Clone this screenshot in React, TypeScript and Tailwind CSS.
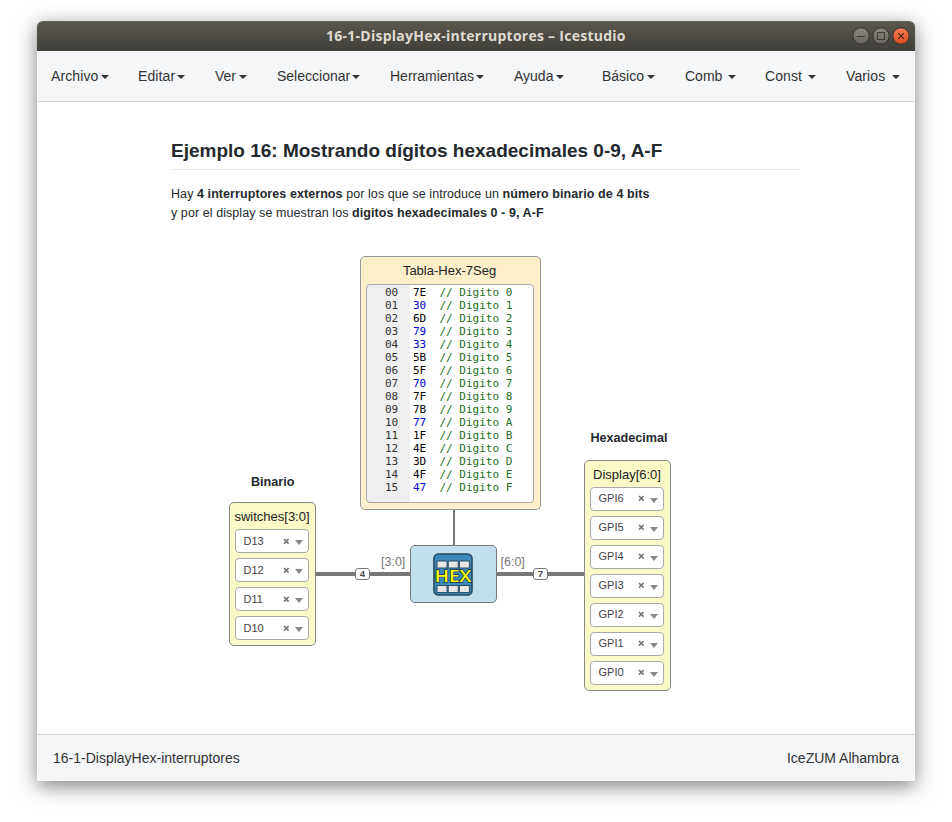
import React from "react";

const MENU_LEFT = [
  { label: "Archivo", box: "w-[87px]", text: "w-[50px] tracking-[0.1px]" },
  { label: "Editar", box: "w-[77px]", text: "w-[39px] tracking-[0.1px]" },
  { label: "Ver", box: "w-[62px]", text: "w-[24px]" },
  { label: "Seleccionar", box: "w-[113px]", text: "w-[75px]" },
  { label: "Herramientas", box: "w-[124px]", text: "w-[86px]" },
  { label: "Ayuda", box: "w-[88px]", text: "w-[42px]" },
  { label: "Básico", box: "w-[83px]", text: "w-[45px]" },
  { label: "Comb", box: "w-[80px]", text: "w-[43px]" },
  { label: "Const", box: "w-[81px]", text: "w-[43px] tracking-[0.1px]" },
  { label: "Varios", box: "w-[56px]", text: "w-[46px] tracking-[0.1px]" },
];

const CODE = ["7E", "30", "6D", "79", "33", "5B", "5F", "70", "7F", "7B", "77", "1F", "4E", "3D", "4F", "47"];

function Caret() {
  return <span className="mt-[2px] h-0 w-0 border-x-4 border-t-4 border-x-transparent border-t-[#333]" />;
}

function WindowButton({ kind }: { kind: "min" | "max" | "close" }) {
  const close = kind === "close";
  return (
    <svg width="18" height="18" viewBox="0 0 18 18">
      <defs>
        <linearGradient id={"g-" + kind} x1="0" y1="0" x2="0" y2="1">
          <stop offset="0" stopColor={close ? "#f68059" : "#8b8981"} />
          <stop offset="1" stopColor={close ? "#dd4c1c" : "#66645e"} />
        </linearGradient>
      </defs>
      <circle cx="9" cy="9" r="8.2" fill={"url(#g-" + kind + ")"} stroke="#33322e" strokeWidth="1" />
      {kind === "min" && <path d="M5 9.5h8" stroke="#3b3a36" />}
      {kind === "max" && <rect x="5.5" y="5.5" width="7" height="7" fill="none" stroke="#3b3a36" />}
      {close && <path d="M6.2 6.2l5.6 5.6M11.8 6.2l-5.6 5.6" stroke="#432013" strokeWidth="1.2" />}
    </svg>
  );
}

function PinSelect({ name }: { name: string }) {
  return (
    <div className="flex h-[24px] w-[74px] items-center rounded-[4px] border border-[#aaa] bg-white pl-[7.5px] text-[11px] text-[#444]">
      <span className="w-[39.5px]">{name}</span>
      <svg width="7" height="7" viewBox="0 0 7 7">
        <path d="M1 1l4.6 4.6M5.6 1L1 5.6" stroke="#777" strokeWidth="1.7" />
      </svg>
      <span className="mt-[3px] ml-[5px] h-0 w-0 border-x-4 border-t-[5px] border-x-transparent border-t-[#888]" />
    </div>
  );
}

function Port({ title, pins }: { title: string; pins: string[] }) {
  return (
    <div className="flex w-[87px] flex-col items-center rounded-[5px] border border-[#888] bg-[#fafac8] pb-[5px]">
      <div className="flex h-[26px] items-center pt-[2px] text-[13px] whitespace-nowrap text-[#222]">{title}</div>
      <div className="flex flex-col gap-[5px]">
        {pins.map((p) => (
          <PinSelect key={p} name={p} />
        ))}
      </div>
    </div>
  );
}

function HexIcon() {
  return (
    <svg width="40" height="43" viewBox="0 0 40 43">
      <rect x="1" y="1" width="38" height="41" rx="4.5" fill="#3c8aba" stroke="#24485f" strokeWidth="1.6" />
      {[4, 15.2, 26.4].map((x) => (
        <g key={x} fill="#e6e6e6" stroke="#2b4f66" strokeWidth="1">
          <rect x={x} y="8" width="10" height="7" />
          <rect x={x} y="32.5" width="10" height="7" />
        </g>
      ))}
      <text
        x="1.8"
        y="29.3"
        textLength="36.4"
        lengthAdjust="spacingAndGlyphs"
        fontFamily="'Open Sans', 'Noto Sans', sans-serif"
        fontWeight="600"
        fontSize="16.5"
        fill="#ffff00"
        stroke="#1c3a50"
        strokeWidth="1.4"
        paintOrder="stroke"
      >
        HEX
      </text>
    </svg>
  );
}

function BusSize({ n }: { n: string }) {
  return (
    <div className="flex h-[12px] w-[15px] items-center justify-center rounded-[3px] border border-[#777] bg-white text-[9.5px] font-bold text-[#444]">
      {n}
    </div>
  );
}

export default function App() {
  return (
    <div className="h-[822px] w-[952px] overflow-hidden bg-white pt-[21px] pl-[37px] font-['Liberation_Sans',Arial,sans-serif]">
      <div className="flex h-[760px] w-[878px] flex-col rounded-t-[6px] bg-white shadow-[0_5px_20px_rgba(0,0,0,0.5)]">
        <header className="flex h-[30px] shrink-0 items-center rounded-t-[6px] border-t border-[#66645b] bg-gradient-to-b from-[#5a574e] to-[#403f3a]">
          <div className="w-[289px]" />
          <h1 className="w-[525.5px] pb-[2px] font-['Open_Sans','Noto_Sans',sans-serif] text-[14px] font-bold tracking-[0.26px] whitespace-nowrap text-[#dfdbd2]">
            16-1-DisplayHex-interruptores – Icestudio
          </h1>
          <div className="-mt-[2px] flex gap-[2px]">
            <WindowButton kind="min" />
            <WindowButton kind="max" />
            <WindowButton kind="close" />
          </div>
        </header>

        <nav className="flex h-[51px] shrink-0 items-center border-b border-[#d5d8da] bg-[#f4f6f8] pl-[14px] text-[14px] text-[#333]">
          {MENU_LEFT.map((m) => (
            <div key={m.label} className={"flex shrink-0 items-center whitespace-nowrap " + m.box}>
              <span className={m.text}>{m.label}</span>
              <Caret />
            </div>
          ))}
        </nav>

        <main className="relative min-h-0 flex-1 text-[#24292e]">
          <section className="ml-[134px] w-[629px] pt-[36px]">
            <h2 className="h-[32px] border-b border-[#eaecef] text-[19px] leading-[25px] font-bold whitespace-nowrap">
              Ejemplo 16: Mostrando dígitos hexadecimales 0-9, A-F
            </h2>
            <p className="mt-[15px] text-[12.5px] leading-[19px] tracking-[0.075px] whitespace-nowrap">
              <span className="block">
                Hay <b>4 interruptores externos</b> por los que se introduce un <b>número binario de 4 bits</b>
              </span>
              <span className="block">
                y por el display se muestran los <b>digitos hexadecimales 0 - 9, A-F</b>
              </span>
            </p>
          </section>

          <div className="absolute top-[407px] left-[416px] h-[37px] w-[1.5px] bg-[#777]" />
          <div className="absolute top-[470px] left-[278px] h-[4px] w-[95px] bg-[#777]" />
          <div className="absolute top-[470px] left-[459px] h-[4px] w-[89px] bg-[#777]" />
          <div className="absolute top-[466px] left-[318px]">
            <BusSize n="4" />
          </div>
          <div className="absolute top-[466px] left-[496px]">
            <BusSize n="7" />
          </div>

          <div className="absolute top-[154px] left-[322.5px] flex h-[254px] w-[181px] flex-col items-center rounded-[5px] border border-[#999] bg-[#fdefc9]">
            <div className="flex h-[27px] items-center pr-[1px] text-[13px] text-[#222]">Tabla-Hex-7Seg</div>
            <div className="h-[219px] w-[168px] overflow-hidden rounded-[4px] border border-[#aaa] bg-[linear-gradient(to_right,#efefef_43px,#fff_43px)] pt-px font-['DejaVu_Sans_Mono',monospace] text-[11px] leading-[13px]">
              {CODE.map((hex, i) => (
                <div key={hex} className="flex h-[13px] whitespace-pre">
                  <span className="w-[46px] pl-[18px] text-[#333]">{String(i).padStart(2, "0")}</span>
                  <span className={/^\d+$/.test(hex) ? "w-[26.5px] text-[#0000cd]" : "w-[26.5px] text-black"}>{hex}</span>
                  <span className="text-[#236e24]">{"// Digito " + i.toString(16).toUpperCase()}</span>
                </div>
              ))}
            </div>
          </div>

          <div className="absolute top-[372px] left-[214px] text-[12.6px] leading-[16px] font-bold">Binario</div>
          <div className="absolute top-[400px] left-[191.5px]">
            <Port title="switches[3:0]" pins={["D13", "D12", "D11", "D10"]} />
          </div>

          <div className="absolute top-[328px] left-[553.5px] text-[12.6px] leading-[16px] font-bold">Hexadecimal</div>
          <div className="absolute top-[357.5px] left-[546.5px]">
            <Port title="Display[6:0]" pins={["GPI6", "GPI5", "GPI4", "GPI3", "GPI2", "GPI1", "GPI0"]} />
          </div>

          <div className="absolute top-[452px] left-[344px] text-[12.5px] leading-[16px] text-[#777]">[3:0]</div>
          <div className="absolute top-[452px] left-[463.5px] text-[12.5px] leading-[16px] text-[#777]">[6:0]</div>
          <div className="absolute top-[443px] left-[372.5px] flex h-[58px] w-[87px] items-center justify-center rounded-[5px] border border-[#777] bg-[#c0dfeb]">
            <HexIcon />
          </div>
        </main>

        <footer className="flex h-[47px] shrink-0 items-center justify-between border-t border-[#d1d8de] bg-[#f4f6f8] px-[16px] text-[14px] text-[#333]">
          <span>16-1-DisplayHex-interruptores</span>
          <span>IceZUM Alhambra</span>
        </footer>
      </div>
    </div>
  );
}
